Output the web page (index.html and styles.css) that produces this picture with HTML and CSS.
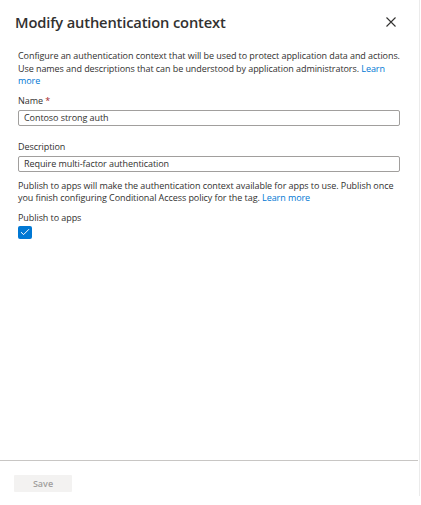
FILE: index.html
```html
<!DOCTYPE html>
<html lang="en">
<head>
<meta charset="utf-8">
<title>Modify authentication context</title>
<link rel="stylesheet" href="styles.css">
</head>
<body>
<div class="panel">
  <header class="header">
    <h1 class="title">Modify authentication context</h1>
    <button class="close" aria-label="Close">
      <svg width="10" height="10" viewBox="0 0 10 10"><path d="M0.5 0.5L9.5 9.5M9.5 0.5L0.5 9.5" stroke="#323130" stroke-width="1.1" fill="none"/></svg>
    </button>
  </header>
  <main class="content">
    <p class="intro">Configure an authentication context that will be used to protect application data and actions. Use names and descriptions that can be understood by application administrators. <a class="link" href="#">Learn more</a></p>
    <label class="label label-name">Name <span class="req">*</span></label>
    <div class="input">Contoso strong auth</div>
    <label class="label label-desc">Description</label>
    <div class="input">Require multi-factor authentication</div>
    <p class="publish-info">Publish to apps will make the authentication context available for apps to use. Publish once you finish configuring Conditional Access policy for the tag. <a class="link" href="#">Learn more</a></p>
    <label class="label label-publish">Publish to apps</label>
    <div class="checkbox">
      <svg width="10" height="8" viewBox="0 0 10 8"><path d="M1 4.2L3.6 6.6L9 1.2" stroke="#fff" stroke-width="1" fill="none"/></svg>
    </div>
  </main>
  <footer class="footer">
    <button class="save">Save</button>
  </footer>
</div>
</body>
</html>
```
FILE: styles.css
```css
* { box-sizing: border-box; }
html, body { margin: 0; padding: 0; background: #fff; }
body {
  font-family: "Open Sans", "Noto Sans", sans-serif;
  color: #323130;
  width: 421px;
  height: 505px;
}
.panel {
  width: 420px;
  height: 496px;
  border-right: 1px solid #ebebeb;
  display: flex;
  flex-direction: column;
}
.header {
  display: flex;
  align-items: center;
  justify-content: space-between;
  height: 43px;
  padding: 0 23px 0 15px;
}
.title {
  margin: 0;
  font-size: 14.7px;
  font-weight: 600;
  line-height: 24px;
  letter-spacing: -0.15px;
}
.close {
  border: 0;
  background: transparent;
  padding: 0;
  width: 10px;
  height: 10px;
  display: flex;
}
.content {
  flex: 1;
  padding: 7px 19px 0 18px;
  font-size: 9px;
  line-height: 12.5px;
  letter-spacing: -0.07px;
}
.intro { margin: 0; }
.link { color: #0078d4; text-decoration: none; }
.label { display: block; line-height: 12px; }
.label-name { margin-top: 7.5px; }
.label-desc { margin-top: 15.5px; }
.label-publish { margin-top: 7px; }
.req { color: #a4262c; }
.input {
  margin-top: 2.5px;
  height: 16px;
  border: 1px solid #a19f9d;
  border-radius: 2px;
  padding: 0 5px;
  line-height: 14px;
}
.publish-info { margin: 8px 0 0; }
.checkbox {
  margin-top: 2px;
  width: 14px;
  height: 13px;
  background: #0078d4;
  border-radius: 2px;
  display: flex;
  align-items: center;
  justify-content: center;
}
.footer {
  border-top: 1px solid #c8c6c4;
  padding: 14px 0 0 14px;
  height: 36px;
  margin-right: 1px;
}
.save {
  display: block;
  width: 58px;
  height: 17px;
  border: 0;
  border-radius: 1px;
  background: #f3f2f1;
  color: #a19f9d;
  font-family: "Open Sans", sans-serif;
  font-size: 9px;
  font-weight: 600;
  line-height: 17px;
  padding: 0;
}
```
